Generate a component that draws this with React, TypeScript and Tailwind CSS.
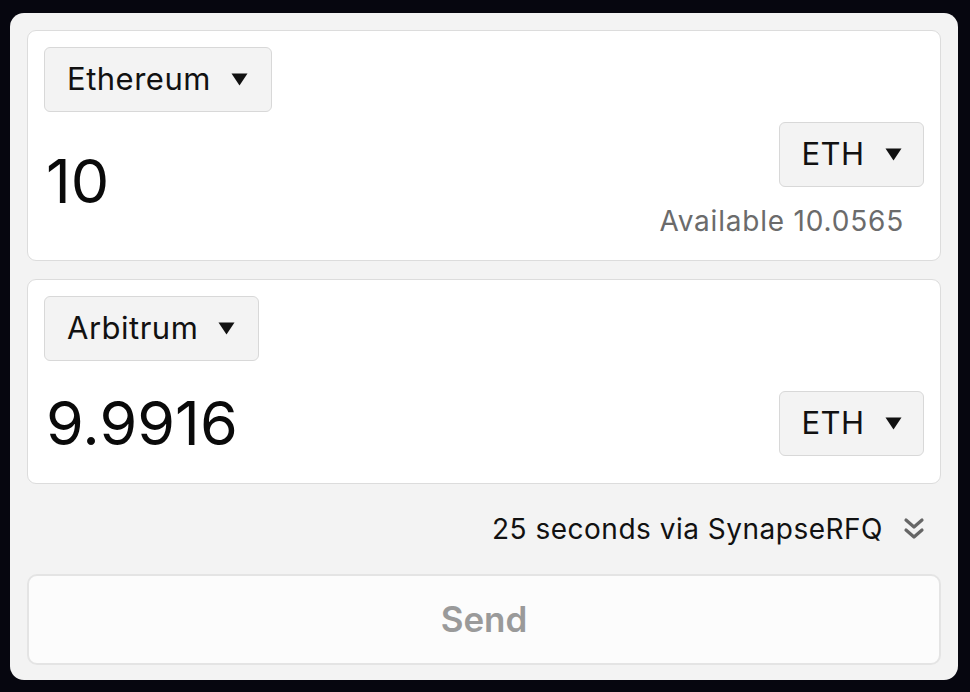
import React from 'react';

const font = { fontFamily: 'Inter, "Noto Sans", sans-serif' };

function Caret() {
  return (
    <svg width="17" height="13" viewBox="0 0 17 13" className="shrink-0">
      <path d="M0.5 0.5 H16.5 L8.5 12.5 Z" fill="#111" />
    </svg>
  );
}

function ChainSelect({ label }: { label: string }) {
  return (
    <div className="flex h-[65px] w-fit items-center gap-[20px] rounded-[6px] border border-[#d8d8d8] bg-[#f3f3f3] pl-[22px] pr-[23px] text-[31px] tracking-[0.5px] text-[#111]">
      <span>{label}</span>
      <Caret />
    </div>
  );
}

function TokenSelect({ label }: { label: string }) {
  return (
    <div className="flex h-[65px] w-[145px] items-center justify-center gap-[20px] rounded-[6px] border border-[#d8d8d8] bg-[#f3f3f3] text-[31px] tracking-[0.5px] text-[#111]">
      <span>{label}</span>
      <Caret />
    </div>
  );
}

function ChevronsDown() {
  return (
    <svg width="22" height="24" viewBox="0 0 22 24" fill="none" stroke="#666" strokeWidth="3.2" strokeLinecap="round" strokeLinejoin="round">
      <path d="M3 3 L11 10 L19 3" />
      <path d="M3 13 L11 20 L19 13" />
    </svg>
  );
}

export default function App() {
  return (
    <div className="min-h-[692px] w-[970px] bg-[#06060f] pl-[10px] pr-[12px] pt-[13px]" style={font}>
      <div className="flex flex-col rounded-[14px] bg-[#f3f3f3] px-[17px] pb-[15px] pt-[17px]">
        {/* from */}
        <div className="flex flex-col rounded-[9px] border border-[#dcdcdc] bg-white px-[16px] pt-[16px] pb-[23px]">
          <ChainSelect label="Ethereum" />
          <div className="mt-[10px] flex items-center justify-between">
            <span className="pl-[2px] pt-[4px] text-[61px] leading-none text-[#0a0a0a]">10</span>
            <div className="flex flex-col items-end">
              <TokenSelect label="ETH" />
              <span className="mt-[18px] pr-[20px] text-[28px] leading-[32px] tracking-[0.8px] text-[#6b6b6b]">Available 10.0565</span>
            </div>
          </div>
        </div>

        {/* to */}
        <div className="mt-[18px] flex flex-col rounded-[9px] border border-[#dcdcdc] bg-white px-[16px] pt-[16px] pb-[27px]">
          <ChainSelect label="Arbitrum" />
          <div className="mt-[30px] flex items-center justify-between">
            <span className="pl-[2px] text-[61px] leading-none text-[#0a0a0a]">9.9916</span>
            <TokenSelect label="ETH" />
          </div>
        </div>

        <div className="flex h-[90px] items-center justify-end gap-[20px] pr-[16px]">
          <span className="text-[28px] tracking-[0.5px] text-[#111]">25 seconds via SynapseRFQ</span>
          <ChevronsDown />
        </div>

        <div className="flex h-[91px] items-center justify-center rounded-[10px] border-2 border-[#e4e4e4] bg-[#fcfcfc] text-[35px] font-semibold text-[#9a9a9a]">
          Send
        </div>
      </div>
    </div>
  );
}
